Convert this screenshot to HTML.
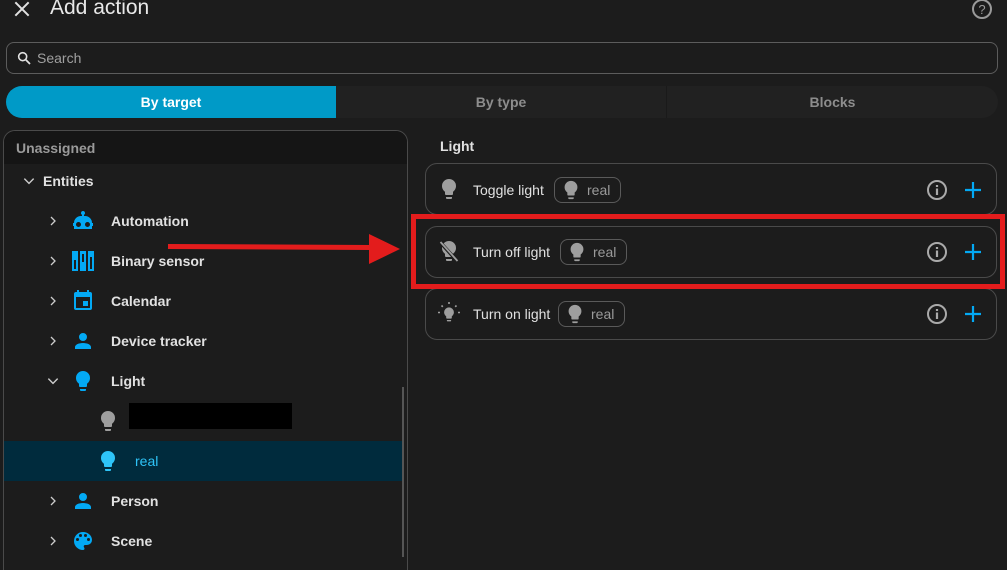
<!DOCTYPE html>
<html><head><meta charset="utf-8"><style>
*{box-sizing:border-box;margin:0;padding:0}
html,body{width:1007px;height:550px}
body{background:#1c1c1c;font-family:"Liberation Sans",sans-serif;color:#e1e1e1;position:relative;overflow:hidden}
.a{position:absolute}
svg{display:block}
.t{font-size:14px;font-weight:bold;color:#e1e1e1}
.card{position:absolute;left:425px;width:572px;height:52px;border:1px solid #4a4a4a;border-radius:12px}
.chip{position:absolute;top:14px;height:26px;border:1px solid #5a5a5a;border-radius:8px;font-size:14px;color:#9a9a9a;padding:4px 10px 0 32px}
.chip svg{position:absolute;left:5px;top:1px}
</style></head><body>
<svg class="a" style="left:12px;top:-1px" width="20" height="20" viewBox="0 0 24 24"><path d="M4 4L20 20M20 4L4 20" stroke="#e1e1e1" stroke-width="2.4"/></svg>
<div class="a" style="left:50px;top:-4px;font-size:21px;color:#e8e8e8">Add action</div>
<svg class="a" style="left:970px;top:-3px" width="24" height="24" viewBox="0 0 24 24"><circle cx="12" cy="12" r="9" fill="none" stroke="#9a9a9a" stroke-width="2"/><text x="12" y="17" text-anchor="middle" font-size="13" fill="#9a9a9a" font-family="Liberation Sans">?</text></svg>

<div class="a" style="left:6px;top:42px;width:992px;height:32px;border:1px solid #5c5c5c;border-radius:8px"></div>
<svg class="a" style="left:16px;top:50px" width="16" height="16" viewBox="0 0 24 24"><circle cx="10" cy="10" r="6" fill="none" stroke="#e1e1e1" stroke-width="2.4"/><path d="M14.5 14.5L21 21" stroke="#e1e1e1" stroke-width="2.6"/></svg>
<div class="a" style="left:37px;top:50px;font-size:14px;color:#a0a0a0">Search</div>

<div class="a" style="left:6px;top:86px;width:992px;height:32px;background:#212121;border-radius:16px"></div>
<div class="a" style="left:6px;top:86px;width:330px;height:32px;background:#009ac7;border-radius:16px 0 0 16px;text-align:center;line-height:32px;font-size:14px;font-weight:bold;color:#fff">By target</div>
<div class="a" style="left:336px;top:86px;width:331px;height:32px;border-right:1px solid #1a1a1a;text-align:center;line-height:32px;font-size:14px;font-weight:bold;color:#8d8d8d">By type</div>
<div class="a" style="left:667px;top:86px;width:331px;height:32px;text-align:center;line-height:32px;font-size:14px;font-weight:bold;color:#8d8d8d">Blocks</div>

<div class="a" style="left:3px;top:130px;width:405px;height:440px;border:1px solid #4a4a4a;border-bottom:none;border-radius:12px 12px 0 0;overflow:hidden">
 <div style="height:33px;background:#151515;padding:9px 0 0 12px;font-size:14px;font-weight:bold;color:#9a9a9a">Unassigned</div>
</div>
<div class="a" style="left:402px;top:387px;width:2px;height:170px;background:#555"></div>

<svg class="a" style="left:22px;top:174px" width="14" height="14" viewBox="0 0 24 24"><path d="M4 8L12 16L20 8" fill="none" stroke="#ccc" stroke-width="2.4"/></svg>
<div class="a t" style="left:43px;top:173px">Entities</div>

<div class="a" style="left:4px;top:441px;width:398px;height:40px;background:#002b3d"></div>

<svg class="a" style="left:47px;top:214px" width="12" height="14" viewBox="0 0 24 24"><path d="M8 4L16 12L8 20" fill="none" stroke="#ccc" stroke-width="2.6"/></svg>
<svg class="a" style="left:71px;top:209px" width="24" height="24" viewBox="0 0 24 24"><path fill="#03a9f4" d="M12 2a2 2 0 0 1 1 3.73V7h1a7 7 0 0 1 7 7h1v3h-1v3H3v-3H2v-3h1a7 7 0 0 1 7-7h1V5.73A2 2 0 0 1 12 2M7.5 13a2.5 2.5 0 1 0 0 5 2.5 2.5 0 0 0 0-5m9 0a2.5 2.5 0 1 0 0 5 2.5 2.5 0 0 0 0-5z"/></svg>
<div class="a t" style="left:111px;top:213px">Automation</div>

<svg class="a" style="left:47px;top:254px" width="12" height="14" viewBox="0 0 24 24"><path d="M8 4L16 12L8 20" fill="none" stroke="#ccc" stroke-width="2.6"/></svg>
<svg class="a" style="left:72px;top:251px" width="22" height="20" viewBox="0 0 22 20"><path fill="#03a9f4" d="M0 0h6v20H0zM8 0h6v20H8zM16 0h6v20h-6z"/><path fill="#1c1c1c" d="M2 9h2v9H2zM10 3h2v8h-2zM18 6h2v12h-2z"/></svg>
<div class="a t" style="left:111px;top:253px">Binary sensor</div>

<svg class="a" style="left:47px;top:294px" width="12" height="14" viewBox="0 0 24 24"><path d="M8 4L16 12L8 20" fill="none" stroke="#ccc" stroke-width="2.6"/></svg>
<svg class="a" style="left:71px;top:289px" width="24" height="24" viewBox="0 0 24 24"><path fill="#03a9f4" d="M19 19H5V8h14m-3-7v2H8V1H6v2H5a2 2 0 0 0-2 2v14a2 2 0 0 0 2 2h14a2 2 0 0 0 2-2V5a2 2 0 0 0-2-2h-1V1m-1 11h-5v5h5z"/></svg>
<div class="a t" style="left:111px;top:293px">Calendar</div>

<svg class="a" style="left:47px;top:334px" width="12" height="14" viewBox="0 0 24 24"><path d="M8 4L16 12L8 20" fill="none" stroke="#ccc" stroke-width="2.6"/></svg>
<svg class="a" style="left:71px;top:329px" width="24" height="24" viewBox="0 0 24 24"><path fill="#03a9f4" d="M12 4a4 4 0 0 1 0 8 4 4 0 0 1 0-8m0 10c4.42 0 8 1.79 8 4v2H4v-2c0-2.210 3.58-4 8-4z"/></svg>
<div class="a t" style="left:111px;top:333px">Device tracker</div>

<svg class="a" style="left:46px;top:374px" width="14" height="14" viewBox="0 0 24 24"><path d="M4 8L12 16L20 8" fill="none" stroke="#ccc" stroke-width="2.4"/></svg>
<svg class="a" style="left:71px;top:369px" width="24" height="24" viewBox="0 0 24 24"><path fill="#03a9f4" d="M12,2A7,7 0 0,0 5,9C5,11.38 6.19,13.47 8,14.74V17A1,1 0 0,0 9,18H15A1,1 0 0,0 16,17V14.74C17.81,13.47 19,11.38 19,9A7,7 0 0,0 12,2M9,21A1,1 0 0,0 10,22H14A1,1 0 0,0 15,21V20H9V21Z"/></svg>
<div class="a t" style="left:111px;top:373px">Light</div>

<svg class="a" style="left:96px;top:409px" width="24" height="24" viewBox="0 0 24 24"><path fill="#9e9e9e" d="M12,2A7,7 0 0,0 5,9C5,11.38 6.19,13.47 8,14.74V17A1,1 0 0,0 9,18H15A1,1 0 0,0 16,17V14.74C17.81,13.47 19,11.38 19,9A7,7 0 0,0 12,2M9,21A1,1 0 0,0 10,22H14A1,1 0 0,0 15,21V20H9V21Z"/></svg>
<div class="a" style="left:129px;top:403px;width:163px;height:26px;background:#000"></div>

<svg class="a" style="left:96px;top:449px" width="24" height="24" viewBox="0 0 24 24"><path fill="#2ec4f8" d="M12,2A7,7 0 0,0 5,9C5,11.38 6.19,13.47 8,14.74V17A1,1 0 0,0 9,18H15A1,1 0 0,0 16,17V14.74C17.81,13.47 19,11.38 19,9A7,7 0 0,0 12,2M9,21A1,1 0 0,0 10,22H14A1,1 0 0,0 15,21V20H9V21Z"/></svg>
<div class="a" style="left:135px;top:453px;font-size:14px;color:#2ec4f8">real</div>

<svg class="a" style="left:47px;top:494px" width="12" height="14" viewBox="0 0 24 24"><path d="M8 4L16 12L8 20" fill="none" stroke="#ccc" stroke-width="2.6"/></svg>
<svg class="a" style="left:71px;top:489px" width="24" height="24" viewBox="0 0 24 24"><path fill="#03a9f4" d="M12 4a4 4 0 0 1 0 8 4 4 0 0 1 0-8m0 10c4.42 0 8 1.79 8 4v2H4v-2c0-2.21 3.58-4 8-4z"/></svg>
<div class="a t" style="left:111px;top:493px">Person</div>

<svg class="a" style="left:47px;top:534px" width="12" height="14" viewBox="0 0 24 24"><path d="M8 4L16 12L8 20" fill="none" stroke="#ccc" stroke-width="2.6"/></svg>
<svg class="a" style="left:71px;top:529px" width="24" height="24" viewBox="0 0 24 24"><path fill="#03a9f4" d="M17.5 12a1.5 1.5 0 0 1-1.5-1.5A1.5 1.5 0 0 1 17.5 9a1.5 1.5 0 0 1 1.5 1.5 1.5 1.5 0 0 1-1.5 1.5m-3-4A1.5 1.5 0 0 1 13 6.5 1.5 1.5 0 0 1 14.5 5 1.5 1.5 0 0 1 16 6.5 1.5 1.5 0 0 1 14.5 8m-5 0A1.5 1.5 0 0 1 8 6.5 1.5 1.5 0 0 1 9.5 5 1.5 1.5 0 0 1 11 6.5 1.5 1.5 0 0 1 9.5 8m-3 4A1.5 1.5 0 0 1 5 10.5 1.5 1.5 0 0 1 6.5 9 1.5 1.5 0 0 1 8 10.5 1.5 1.5 0 0 1 6.5 12M12 3a9 9 0 0 0-9 9 9 9 0 0 0 9 9 1.5 1.5 0 0 0 1.5-1.5c0-.39-.15-.74-.39-1-.23-.27-.38-.62-.38-1a1.5 1.5 0 0 1 1.5-1.5H16a5 5 0 0 0 5-5c0-4.42-4.030-8-9-8z"/></svg>
<div class="a t" style="left:111px;top:533px">Scene</div>

<div class="a t" style="left:440px;top:138px">Light</div>

<div class="card" style="top:163px"></div>
<div class="card" style="top:226px"></div>
<div class="card" style="top:288px"></div>

<svg class="a" style="left:437px;top:177px" width="24" height="24" viewBox="0 0 24 24"><path fill="#9e9e9e" d="M12,2A7,7 0 0,0 5,9C5,11.38 6.19,13.47 8,14.74V17A1,1 0 0,0 9,18H15A1,1 0 0,0 16,17V14.74C17.81,13.47 19,11.38 19,9A7,7 0 0,0 12,2M9,21A1,1 0 0,0 10,22H14A1,1 0 0,0 15,21V20H9V21Z"/></svg>
<div class="a" style="left:473px;top:182px;font-size:14px;color:#e1e1e1">Toggle light</div>
<div class="chip" style="left:554px;top:177px">real<svg width="22" height="22" viewBox="0 0 24 24"><path fill="#9e9e9e" d="M12,2A7,7 0 0,0 5,9C5,11.38 6.19,13.47 8,14.74V17A1,1 0 0,0 9,18H15A1,1 0 0,0 16,17V14.74C17.81,13.47 19,11.38 19,9A7,7 0 0,0 12,2M9,21A1,1 0 0,0 10,22H14A1,1 0 0,0 15,21V20H9V21Z"/></svg></div>

<svg class="a" style="left:437px;top:239px" width="24" height="24" viewBox="0 0 24 24"><path fill="#9e9e9e" d="M12,2A7,7 0 0,0 5,9C5,11.38 6.19,13.47 8,14.74V17A1,1 0 0,0 9,18H15A1,1 0 0,0 16,17V14.74C17.81,13.47 19,11.38 19,9A7,7 0 0,0 12,2M9,21A1,1 0 0,0 10,22H14A1,1 0 0,0 15,21V20H9V21Z"/><path d="M3 3L21 23" stroke="#1c1c1c" stroke-width="3.5"/><path d="M3.5 3L20.5 22" stroke="#9e9e9e" stroke-width="1.8"/></svg>
<div class="a" style="left:473px;top:244px;font-size:14px;color:#e1e1e1">Turn off light</div>
<div class="chip" style="left:560px;top:239px">real<svg width="22" height="22" viewBox="0 0 24 24"><path fill="#9e9e9e" d="M12,2A7,7 0 0,0 5,9C5,11.38 6.19,13.47 8,14.74V17A1,1 0 0,0 9,18H15A1,1 0 0,0 16,17V14.74C17.81,13.47 19,11.38 19,9A7,7 0 0,0 12,2M9,21A1,1 0 0,0 10,22H14A1,1 0 0,0 15,21V20H9V21Z"/></svg></div>

<svg class="a" style="left:437px;top:302px" width="24" height="24" viewBox="0 0 24 24"><path fill="#9e9e9e" transform="translate(3.6 4) scale(0.7)" d="M12,2A7,7 0 0,0 5,9C5,11.38 6.19,13.47 8,14.74V17A1,1 0 0,0 9,18H15A1,1 0 0,0 16,17V14.74C17.81,13.47 19,11.38 19,9A7,7 0 0,0 12,2M9,21A1,1 0 0,0 10,22H14A1,1 0 0,0 15,21V20H9V21Z"/><path d="M1 10.5h2M21 10.5h2M12 0v2M4.5 3.5l1.3 1.3M19.5 3.5l-1.3 1.3" stroke="#9e9e9e" stroke-width="1.6"/></svg>
<div class="a" style="left:473px;top:306px;font-size:14px;color:#e1e1e1">Turn on light</div>
<div class="chip" style="left:558px;top:301px">real<svg width="22" height="22" viewBox="0 0 24 24"><path fill="#9e9e9e" d="M12,2A7,7 0 0,0 5,9C5,11.38 6.19,13.47 8,14.74V17A1,1 0 0,0 9,18H15A1,1 0 0,0 16,17V14.74C17.81,13.47 19,11.38 19,9A7,7 0 0,0 12,2M9,21A1,1 0 0,0 10,22H14A1,1 0 0,0 15,21V20H9V21Z"/></svg></div>

<svg class="a" style="left:925px;top:178px" width="24" height="24" viewBox="0 0 24 24"><circle cx="12" cy="12" r="9" fill="none" stroke="#aaa" stroke-width="2"/><path d="M12 10.5v6.5M12 7v2" stroke="#aaa" stroke-width="2.2"/></svg>
<svg class="a" style="left:961px;top:178px" width="24" height="24" viewBox="0 0 24 24"><path d="M12 4v16M4 12h16" stroke="#03a9f4" stroke-width="2.2"/></svg>
<svg class="a" style="left:925px;top:240px" width="24" height="24" viewBox="0 0 24 24"><circle cx="12" cy="12" r="9" fill="none" stroke="#aaa" stroke-width="2"/><path d="M12 10.5v6.5M12 7v2" stroke="#aaa" stroke-width="2.2"/></svg>
<svg class="a" style="left:961px;top:240px" width="24" height="24" viewBox="0 0 24 24"><path d="M12 4v16M4 12h16" stroke="#03a9f4" stroke-width="2.2"/></svg>
<svg class="a" style="left:925px;top:302px" width="24" height="24" viewBox="0 0 24 24"><circle cx="12" cy="12" r="9" fill="none" stroke="#aaa" stroke-width="2"/><path d="M12 10.5v6.5M12 7v2" stroke="#aaa" stroke-width="2.2"/></svg>
<svg class="a" style="left:961px;top:302px" width="24" height="24" viewBox="0 0 24 24"><path d="M12 4v16M4 12h16" stroke="#03a9f4" stroke-width="2.2"/></svg>

<div class="a" style="left:411px;top:214px;width:594px;height:75px;border:5px solid #e31c1c"></div>
<svg class="a" style="left:160px;top:230px" width="245" height="40" viewBox="0 0 245 40"><path d="M8 16.5L212 17.5" stroke="#e31c1c" stroke-width="5"/><path d="M209 4L240 19L209 34Z" fill="#e31c1c"/></svg>
</body></html>
